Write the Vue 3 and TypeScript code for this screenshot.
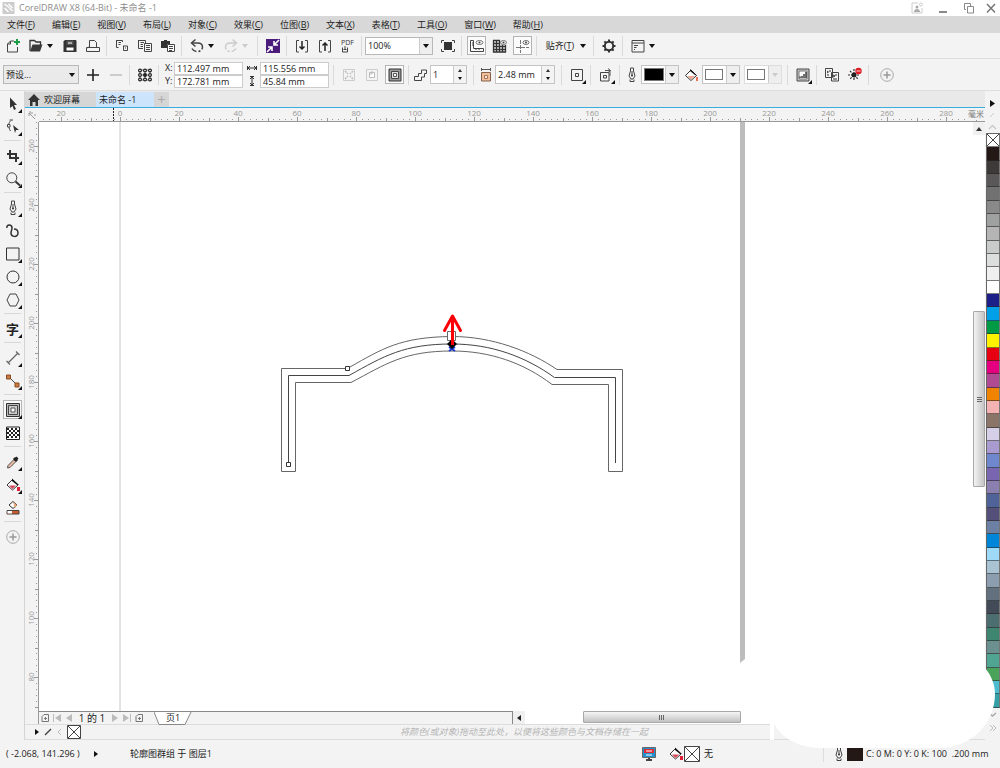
<script setup lang="ts">
import { ref } from 'vue'

interface Tool {
  kind: 'btn' | 'caret' | 'sep' | 'wide'
  icon?: string
  label?: string
  active?: boolean
  faint?: boolean
  flyout?: boolean
}

const G = '#444'
const icons: Record<string, string> = {
  new: `<path d="M9 3H5.500L2.500 6V14H12.500V9M5.500 3V6H2.500" fill="none" stroke="${G}"/><path d="M12 1V7M9 4H15" stroke="#1a9d45" stroke-width="2"/>`,
  open: `<path d="M2 13V2.500H6.500L8 4H12.500V7" fill="none" stroke="#333" stroke-width="1.300"/><path d="M4.500 6.500H14.500L12 13.500H2Z" fill="#3a3a3a"/>`,
  save: `<path d="M3 2H14L14.500 3V14H1.500V3.500Z" fill="#333"/><path d="M4.500 2.500H11.500V7H4.500Z" fill="#555"/><path d="M4.500 9.500H11.500V12.500H4.500Z" fill="#fff"/><path d="M6 5H10M6 11H7.500" stroke="#fff"/>`,
  print: `<path d="M4.500 9V2.500H9.500L11.500 4.500V9M1.500 9.500H14.500V13.500H1.500ZM3.500 9L2 10" fill="none" stroke="${G}"/><path d="M4 9.500H12" stroke="${G}"/>`,
  cut: `<path d="M2.500 2.500H8.500V4M2.500 2V9.500H4.500M4.500 4.500H7M4.500 6.500H6.500M9 8H13.500V12.500H9.500V8M11 10H12" fill="none" stroke="${G}"/>`,
  copy: `<path d="M1.500 2.500H8.500V5M1.500 2V10.500H6M3.500 4.500H7M3.500 6.500H6M3.500 8.500H6M7.500 5.500H14.500V13.500H7.500ZM9 7.500H13M9 9.500H13M9 11.500H13" fill="none" stroke="${G}"/>`,
  paste: `<path d="M1 3H4V2H7V3H10V6H7V10H1Z" fill="#333"/><path d="M7.500 6.500H14.500V13.500H7.500Z" fill="#fff" stroke="${G}"/><path d="M9 8.500H13M9 10.500H13M9 12.500H12" stroke="${G}"/>`,
  undo: `<path d="M3 5H8.500C12 5 13.500 7 13.500 9C13.500 12 11 13.500 8.500 13.500C6 13.500 4 12.500 3 10.500" fill="none" stroke="${G}" stroke-width="1.500" stroke-dasharray="15 2 2 2"/><path d="M6.500 1.500L2.500 5L6.500 8.500" fill="none" stroke="${G}" stroke-width="1.500"/>`,
  redo: `<path d="M13 5H7.500C4 5 2.500 7 2.500 9C2.500 12 5 13.500 7.500 13.500C10 13.500 12 12.500 13 10.500" fill="none" stroke="#ccc" stroke-width="1.500" stroke-dasharray="15 2 2 2"/><path d="M9.500 1.500L13.500 5L9.500 8.500" fill="none" stroke="#ccc" stroke-width="1.500"/>`,
  launch: `<path d="M1 1H15V15H1Z" fill="#4a1b7a"/><path d="M14 2L9 7M9 3V7H13M2 14L7 9M3 9H7V13" fill="none" stroke="#fff" stroke-width="1.600"/>`,
  import: `<path d="M5 2.500H2.500V14H5M11 2.500H13.500V14H11" fill="none" stroke="${G}"/><path d="M8 3V11M5.500 8.500L8 11L10.500 8.500" fill="none" stroke="#222" stroke-width="1.500"/>`,
  export: `<path d="M5 2.500H2.500V14H5M11 2.500H13.500V14H11" fill="none" stroke="${G}"/><path d="M8 13V5M5.500 7.500L8 5L10.500 7.500" fill="none" stroke="#222" stroke-width="1.500"/>`,
  pdf: `<text x="1" y="7" font-family="Open Sans, sans-serif" font-size="7" fill="#333">PDF</text><path d="M2.500 9.500V14H7.500V9.500M5 8V12M3.500 11.500H6.500" fill="none" stroke="${G}"/>`,
  full: `<path d="M4 4H12V12H4Z" fill="#333"/><path d="M1.500 5V2.500H4M12 2.500H14.500V5M14.500 11V13.500H12M4 13.500H1.500V11" fill="none" stroke="${G}"/>`,
  rulers: `<path d="M1.500 2.500H4.500V10.500H14.500V13.500H1.500ZM3 5H4M3 7H4M7 11V12M10 11V12" fill="none" stroke="${G}"/><ellipse cx="10.500" cy="4.500" rx="3.500" ry="2" fill="none" stroke="#777"/><circle cx="10.500" cy="4.500" r="1" fill="#444"/>`,
  grid: `<path d="M1.500 2V14.500M4.500 2V14.500M7.500 2V14.500M10.500 7V14.500M13.500 7V14.500M1 2.500H8M1 5.500H8M1 8.500H14M1 11.500H14M1 14H14" stroke="#333" stroke-width="1.300"/><ellipse cx="11.500" cy="4.500" rx="3" ry="2" fill="none" stroke="#777"/><circle cx="11.500" cy="4.500" r="1" fill="#444"/>`,
  guides: `<path d="M5.500 2V15" stroke="#777" stroke-dasharray="4 1"/><path d="M1 9.500H14" stroke="#777" stroke-dasharray="4 1"/><ellipse cx="11" cy="4.500" rx="3" ry="2" fill="none" stroke="#777"/><circle cx="11" cy="4.500" r="1" fill="#444"/>`,
  gear: `<circle cx="8" cy="8" r="4.200" fill="none" stroke="#333" stroke-width="2"/><path d="M8 1.500V4M8 12V14.500M1.500 8H4M12 8H14.500M3.400 3.400L5 5M11 11L12.600 12.600M12.600 3.400L11 5M5 11L3.400 12.600" stroke="#333" stroke-width="2"/>`,
  panel: `<path d="M2 2.500H14V14H2ZM2 5H14" fill="none" stroke="${G}"/><path d="M4 7.500H8M4 9.500H6.500M4 11.500H5" stroke="${G}"/>`,
  plus: `<path d="M8 2V14M2 8H14" stroke="#222" stroke-width="1.600"/>`,
  minus: `<path d="M2 8H14" stroke="#bbb" stroke-width="1.400"/>`,
  origin: `<path d="M2 3H14M2 8H14M2 13H14M3 3V13M8 3V13M13 3V13" stroke="#777"/><g fill="#fff" stroke="#222" stroke-width="1.200"><circle cx="3" cy="3.500" r="1.400"/><circle cx="8" cy="3.500" r="1.400"/><circle cx="13" cy="3.500" r="1.400"/><circle cx="3" cy="8" r="1.400"/><circle cx="13" cy="8" r="1.400"/><circle cx="3" cy="12.500" r="1.400"/><circle cx="8" cy="12.500" r="1.400"/><circle cx="13" cy="12.500" r="1.400"/></g><circle cx="8" cy="8" r="2" fill="#222"/>`,
  toCenter: `<path d="M2.500 2.500H13.500V13.500H2.500Z" fill="none" stroke="#ccc"/><path d="M4 4L7 7M12 4L9 7M4 12L7 9M12 12L9 9" stroke="#bbb" stroke-width="1.500" stroke-dasharray="2 1"/>`,
  inside: `<path d="M2.500 2.500H13.500V13.500H2.500Z" fill="none" stroke="#ccc"/><path d="M5.500 5.500H10.500V10.500H5.500Z" fill="#fff" stroke="#bbb"/><path d="M5 7H8V4" fill="none" stroke="#bbb"/>`,
  outside: `<path d="M2 2H14V14H2Z" fill="#999" stroke="#333"/><path d="M4.500 4.500H11.500V11.500H4.500Z" fill="#ddd" stroke="#444"/><path d="M6.500 6.500H9.500V9.500H6.500Z" fill="#fff" stroke="#555"/>`,
  steps: `<path d="M1.500 9.500H5.500V6.500H8.500V3H13.500V6.500H11.500V10H8.500V13.500H1.500Z" fill="none" stroke="${G}"/>`,
  offset: `<path d="M3.500 5.500H12.500V14H3.500Z" fill="#f0bd99" stroke="#85604a"/><path d="M3 2.500H13M3.500 1V4M12.500 1V4" stroke="#555"/><path d="M6.500 8.500H9.500V11.500H6.500Z" fill="#fbe4d3" stroke="#a5745a"/>`,
  corner: `<path d="M2.500 2.500H13.500V13.500H2.500ZM6.500 6.500H9.500V9.500H6.500Z" fill="none" stroke="${G}"/>`,
  colorstep: `<path d="M2.500 5.500H11V14H2.500ZM5.500 8.500H8.500V11H5.500Z" fill="none" stroke="${G}"/><path d="M7 3.500H12V9M10 1.500L12.500 3.500L10 5.500" fill="none" stroke="#555"/>`,
  pen: `<path d="M6.500 1H9.500V4L11 9L9 12H7L5 9L6.500 4ZM8 4V9M6 12.500V14.500H10V12.500" fill="none" stroke="${G}"/><circle cx="8" cy="8.500" r="1" fill="#333"/>`,
  bucket: `<path d="M8 3L13.500 8.500L8 13.500L2.500 8.500Z" fill="#fff" stroke="#333"/><path d="M7 2L14 8.500L12 8L7 4Z" fill="#111"/><path d="M4.500 9H11.500L8 12.500Z" fill="#eda58f"/><path d="M14 10V14" stroke="#e8745a" stroke-width="2"/>`,
  accel: `<path d="M2 2H14V14H2Z" fill="#ccc" stroke="#444"/><path d="M4 4H12V12H4Z" fill="#fff" stroke="#777"/><path d="M5 11V9.500M7 11V9M9 11V7M11 11V5" stroke="#333" stroke-width="1.400"/>`,
  copyprops: `<path d="M1.500 1.500H8.500V10.500H1.500ZM7.500 5.500H14.500V14H7.500Z" fill="#f5f5f5" stroke="${G}"/><path d="M3 4L4.500 5L3 6M5 4H7M3 8H5M9 8L11 9L9 10M11 8H13M9 12H13" fill="none" stroke="#333"/>`,
  clear: `<path d="M7 2V14M1 8H13M3 4L11 12M11 4L3 12" stroke="#333" stroke-dasharray="2 1" stroke-width="1.200"/><circle cx="7" cy="8" r="2.500" fill="#222"/><circle cx="11.500" cy="4" r="3.200" fill="#e01b24"/><path d="M9.500 4H13.500" stroke="#ffd5d5"/>`,
  add: `<circle cx="8" cy="8" r="6.300" fill="none" stroke="#aaa"/><path d="M8 4.500V11.500M4.500 8H11.500" stroke="#999" stroke-width="1.500"/>`,
  pick: `<path d="M5 1.500L12 9H9L11 13L9 14L7.500 10L5 12Z" fill="#333"/>`,
  shape: `<path d="M6 1.500C3 4 3 8 5.500 12" fill="none" stroke="#444"/><path d="M4.500 1H8M2.500 5.500H5V8H2.500Z" fill="#fff" stroke="#444"/><path d="M8 6L14 11L11 11L10 14Z" fill="#333"/>`,
  crop: `<path d="M5 2V10H14M2 6H11V14" fill="none" stroke="#333" stroke-width="2"/>`,
  zoom: `<circle cx="6.800" cy="6.800" r="5" fill="none" stroke="#444"/><path d="M10.500 10.500L15 14.500" stroke="#333" stroke-width="2"/>`,
  curve: `<path d="M2 5C1 1 7 1 7 5C7 7 6 8 6 10C6 14 13 15 13 10C13 7 11 6 9 6" fill="none" stroke="#333" stroke-width="1.500"/>`,
  rect: `<path d="M1.500 2H14V14H1.500Z" fill="none" stroke="#333"/>`,
  ellipse: `<circle cx="8" cy="8" r="6" fill="none" stroke="#333"/>`,
  poly: `<path d="M5 2H11L14 8L11 14H5L2 8Z" fill="none" stroke="#444"/>`,
  dimension: `<path d="M3 13L13 3M1.500 11L5 14.500M11 1.500L14.500 5" fill="none" stroke="#666" stroke-width="1.300"/>`,
  connect: `<path d="M4 4L12 12" stroke="#444"/><path d="M1.500 2H5.500V6H1.500ZM10 10H14V14H10Z" fill="#c77c45" stroke="#8b4a20"/>`,
  contour: `<path d="M1.500 1.500H14.500V14.500H1.500Z" fill="#bbb" stroke="#333"/><path d="M3.500 3.500H12.500V12.500H3.500Z" fill="#ccc" stroke="#444"/><path d="M6 6H10V10H6Z" fill="#fff" stroke="#555"/>`,
  checker: `<path d="M1.500 2H14.500V14.500H1.500Z" fill="#fff" stroke="#222"/><path d="M2 4H14M2 8H14M2 12H14" stroke="#222" stroke-width="2" stroke-dasharray="2 2"/><path d="M4 6H14M4 10H14" stroke="#222" stroke-width="2" stroke-dasharray="2 2"/>`,
  dropper: `<path d="M2.500 14L3 11.500L9 5.500L11 7.500L5 13.500Z" fill="#e8b9a2" stroke="#555"/><path d="M9 4L12 7M10.500 5.500L12.500 3.500" stroke="#222" stroke-width="3"/>`,
  fill: `<path d="M7.500 2.500L13 8L7.500 13L2 8Z" fill="#fff" stroke="#333"/><path d="M7 1.500L14 8L12 8L7 4Z" fill="#111"/><path d="M4 8.500H11L7.500 12Z" fill="#d9465a"/><path d="M13.500 10V14" stroke="#df1f35" stroke-width="3"/>`,
  smartfill: `<path d="M8 1.500L12 5L8 8.500L4 5Z" fill="#fff" stroke="#333"/><path d="M8 2L12 5L10 8Z" fill="#e8a273"/><path d="M2 10.500H14V14H2Z" fill="#cb5a30" stroke="#444"/><path d="M2.500 11H7V13.500H2.500Z" fill="#fff"/>`,
  monitor: `<path d="M1.500 1.500H14.500V11.500H1.500Z" fill="#2491cf" stroke="#666"/><path d="M3 3H13V7H3Z" fill="#e02b35"/><path d="M5 5H11M5 9H11" stroke="#fff"/><path d="M5 14H11M8 12V14" stroke="#444" stroke-width="2"/>`,
}

const b = (icon: string, label: string, extra: Partial<Tool> = {}): Tool => ({ kind: 'btn', icon, label, ...extra })
const sep: Tool = { kind: 'sep' }
const wide: Tool = { kind: 'wide' }
const caret = (label: string, faint = false): Tool => ({ kind: 'caret', label, faint })

const standardLeft: Tool[] = [
  b('new', '新建'), b('open', '打开'), caret('最近文件'), b('save', '保存'), b('print', '打印'), sep,
  b('cut', '剪切'), b('copy', '复制'), b('paste', '粘贴'), sep,
  b('undo', '撤消'), caret('撤消列表'), b('redo', '重做'), caret('重做列表', true), wide,
  b('launch', '启动'), sep, b('import', '导入'), b('export', '导出'), b('pdf', '发布为 PDF'), sep,
]
const standardMid: Tool[] = [
  b('full', '全屏预览'), sep, b('rulers', '显示标尺', { active: true }), b('grid', '显示网格'),
  b('guides', '显示辅助线', { active: true }), sep,
]
const standardRight: Tool[] = [caret('贴齐选项'), sep, b('gear', '选项'), sep, b('panel', '应用程序启动器'), caret('启动器列表')]

const toolbox: Tool[] = [
  b('pick', '选择', { flyout: true }), b('shape', '形状', { flyout: true }), sep,
  b('crop', '裁剪', { flyout: true }), b('zoom', '缩放', { flyout: true }), sep,
  b('pen', '钢笔', { flyout: true }), b('curve', '艺术笔'), b('rect', '矩形', { flyout: true }),
  b('ellipse', '椭圆形', { flyout: true }), b('poly', '多边形', { flyout: true }), sep,
  b('text', '文本', { flyout: true }), sep,
  b('dimension', '度量', { flyout: true }), b('connect', '连接器', { flyout: true }), sep,
  b('contour', '轮廓图', { flyout: true, active: true }), b('checker', '透明度'), sep,
  b('dropper', '滴管', { flyout: true }), b('fill', '交互式填充', { flyout: true }), b('smartfill', '智能填充'), sep,
  b('add', '添加工具'),
]

const menus: [string, string][] = [
  ['文件', 'F'], ['编辑', 'E'], ['视图', 'V'], ['布局', 'L'], ['对象', 'C'], ['效果', 'C'],
  ['位图', 'B'], ['文本', 'X'], ['表格', 'T'], ['工具', 'O'], ['窗口', 'W'], ['帮助', 'H'],
]

const palette = [
  '#231815', '#3e3a39', '#595757', '#727171', '#898989', '#9fa0a0', '#b5b5b6', '#c9caca', '#dcdddd', '#efefef',
  '#ffffff', '#1d2088', '#00a0e9', '#009944', '#fff100', '#e60012', '#e4007f', '#b04a93', '#f08300', '#f4b3b3',
  '#8b7568', '#d5d0e8', '#a99ad0', '#6f87cc', '#7866b0', '#8a7fae', '#4f6399', '#55507a', '#6c80a4', '#0086d8',
  '#9fd9f8', '#a9c3d3', '#8b9dae', '#63717f', '#434b58', '#4d6e70', '#3e8670', '#6b908f', '#4fa592', '#4aa35a',
  '#4cbdd0', '#32a0a5',
]

const posX = ref('112.497 mm')
const posY = ref('172.781 mm')
const sizeW = ref('115.556 mm')
const sizeH = ref('45.84 mm')
const stepCount = ref('1')
const offset = ref('2.48 mm')

const UNIT = 59
const hLabels = Array.from({ length: 16 }, (_, i) => ({ at: 22 + i * UNIT, text: String(Math.abs((i - 1) * 20)) }))
const vLabels = Array.from({ length: 10 }, (_, i) => ({ at: 24 + i * UNIT, text: String(260 - i * 20) }))
const ticks = (start: number, count: number) => {
  let fine = ''
  let half = ''
  for (let i = 0; i < count; i++) {
    const p = start + Math.round((i * UNIT) / 10)
    if (i % 10 === 5) half += `${p} `
    else fine += `${p} `
  }
  return { fine: fine.trim().split(' '), half: half.trim().split(' ') }
}
const hTicks = ticks(-37, 180)
const vTicks = ticks(-35, 112)
</script>

<template>
  <div class="app">
    <header class="title">
      <svg class="logo" viewBox="0 0 12 12"><path d="M0 0H12V12H0Z" fill="#ccc" /><path d="M2 2L6 5L10 9M6 2L10 6M2 6L6 10" stroke="#fff" stroke-width="1.500" /></svg>
      <span class="caption">CorelDRAW X8 (64-Bit) - 未命名 -1</span>
      <button class="win" aria-label="登录"><svg viewBox="0 0 12 12"><path d="M1 1H7M1 1V11H11V6" fill="none" stroke="#ccc" /><circle cx="6" cy="5" r="1.500" fill="#aaa" /><path d="M3 10C3 6 9 6 9 10Z" fill="#aaa" /><circle cx="10" cy="2.500" r="1.500" fill="none" stroke="#ccc" /></svg></button>
      <button class="win" aria-label="最小化"><svg viewBox="0 0 12 12"><path d="M2 10H10" stroke="#888" stroke-width="2" /></svg></button>
      <button class="win" aria-label="还原"><svg viewBox="0 0 12 12"><path d="M3 7.500H1.500V1.500H7.500V4M4.500 4.500H10.500V11H4.500Z" fill="none" stroke="#888" /></svg></button>
      <button class="win close" aria-label="关闭"><svg viewBox="0 0 12 12"><path d="M2 2L10 10.500M10 2L2 10.500" stroke="#777" stroke-width="1.500" /></svg></button>
    </header>

    <nav class="menubar">
      <button v-for="m in menus" :key="m[0]">{{ m[0] }}(<u>{{ m[1] }}</u>)</button>
    </nav>

    <div class="bar standard">
      <template v-for="(t, i) in standardLeft" :key="'l' + i">
        <button v-if="t.kind === 'btn'" class="ib" :aria-label="t.label"><svg viewBox="0 0 16 16" v-html="icons[t.icon!]" /></button>
        <button v-else-if="t.kind === 'caret'" class="caret" :class="{ faint: t.faint }" :aria-label="t.label"><i /></button>
        <span v-else class="sep" :class="{ wide: t.kind === 'wide' }" />
      </template>
      <div class="combo zoomlevel"><select aria-label="缩放级别"><option>100%</option></select><span class="drop"><i /></span></div>
      <template v-for="(t, i) in standardMid" :key="'m' + i">
        <button v-if="t.kind === 'btn'" class="ib" :class="{ active: t.active }" :aria-label="t.label"><svg viewBox="0 0 16 16" v-html="icons[t.icon!]" /></button>
        <span v-else class="sep" />
      </template>
      <button class="snap">贴齐(<u>T</u>)</button>
      <template v-for="(t, i) in standardRight" :key="'r' + i">
        <button v-if="t.kind === 'btn'" class="ib" :aria-label="t.label"><svg viewBox="0 0 16 16" v-html="icons[t.icon!]" /></button>
        <button v-else-if="t.kind === 'caret'" class="caret" :aria-label="t.label"><i /></button>
        <span v-else class="sep" />
      </template>
    </div>

    <div class="bar props">
      <div class="combo preset"><select aria-label="预设"><option>预设...</option></select><span class="drop"><i /></span></div>
      <button class="ib" aria-label="添加预设"><svg viewBox="0 0 16 16" v-html="icons.plus" /></button>
      <button class="ib" aria-label="删除预设"><svg viewBox="0 0 16 16" v-html="icons.minus" /></button>
      <span class="sep" />
      <button class="ib" aria-label="对象原点"><svg viewBox="0 0 16 16" v-html="icons.origin" /></button>
      <span class="sep" />
      <div class="pair">
        <label for="px">X:</label><input id="px" v-model="posX" />
        <label for="py">Y:</label><input id="py" v-model="posY" />
      </div>
      <div class="pair size">
        <label for="sw" aria-label="宽度"><svg viewBox="0 0 12 12"><path d="M1 6H11M1.500 4V8M10.500 4V8M4 4L2 6L4 8M8 4L10 6L8 8" fill="none" stroke="#333" /></svg></label><input id="sw" v-model="sizeW" />
        <label for="sh" aria-label="高度"><svg viewBox="0 0 12 12"><path d="M6 1V11M4 1.500H8M4 10.500H8M4 4L6 2L8 4M4 8L6 10L8 8" fill="none" stroke="#333" /></svg></label><input id="sh" v-model="sizeH" />
      </div>
      <span class="sep" />
      <button class="ib" aria-label="到中心"><svg viewBox="0 0 16 16" v-html="icons.toCenter" /></button>
      <button class="ib" aria-label="内部轮廓"><svg viewBox="0 0 16 16" v-html="icons.inside" /></button>
      <button class="ib active" aria-label="外部轮廓"><svg viewBox="0 0 16 16" v-html="icons.outside" /></button>
      <span class="sep" />
      <label class="ib slim" for="steps" aria-label="轮廓图步长"><svg viewBox="0 0 16 16" v-html="icons.steps" /></label>
      <div class="spin steps"><input id="steps" v-model="stepCount" /><span class="ud"><button aria-label="增加步长"><i class="up" /></button><button aria-label="减少步长"><i /></button></span></div>
      <span class="sep" />
      <label class="ib slim" for="offset" aria-label="轮廓图偏移"><svg viewBox="0 0 16 16" v-html="icons.offset" /></label>
      <div class="spin offset"><input id="offset" v-model="offset" /><span class="ud"><button aria-label="增加偏移"><i class="up" /></button><button aria-label="减少偏移"><i /></button></span></div>
      <span class="sep" />
      <button class="ib flyout" aria-label="轮廓图角"><svg viewBox="0 0 16 16" v-html="icons.corner" /></button>
      <span class="sep" />
      <button class="ib flyout" aria-label="轮廓色"><svg viewBox="0 0 16 16" v-html="icons.colorstep" /></button>
      <span class="sep" />
      <span class="ib slim"><svg viewBox="0 0 16 16" v-html="icons.pen" /></span>
      <button class="swatch" aria-label="轮廓颜色"><span class="chip black" /><span class="drop"><i /></span></button>
      <span class="ib"><svg viewBox="0 0 16 16" v-html="icons.bucket" /></span>
      <button class="swatch" aria-label="填充色"><span class="chip" /><span class="drop"><i /></span></button>
      <button class="swatch last" aria-label="最后一个填充挑选器" disabled><span class="chip" /><span class="drop"><i /></span></button>
      <span class="sep" />
      <button class="ib flyout" aria-label="对象和颜色加速"><svg viewBox="0 0 16 16" v-html="icons.accel" /></button>
      <span class="sep" />
      <button class="ib" aria-label="复制轮廓图属性"><svg viewBox="0 0 16 16" v-html="icons.copyprops" /></button>
      <button class="ib" aria-label="清除轮廓"><svg viewBox="0 0 16 16" v-html="icons.clear" /></button>
      <span class="sep" />
      <button class="ib custom" aria-label="快速自定义"><svg viewBox="0 0 16 16" v-html="icons.add" /></button>
    </div>

    <div class="work">
      <aside class="toolbox">
        <template v-for="(t, i) in toolbox" :key="i">
          <span v-if="t.kind === 'sep'" class="hsep" />
          <button v-else class="ib" :class="{ active: t.active, flyout: t.flyout }" :aria-label="t.label">
            <b v-if="t.icon === 'text'">字</b>
            <svg v-else viewBox="0 0 16 16" v-html="icons[t.icon!]" />
          </button>
        </template>
      </aside>

      <main class="doc">
        <div class="tabs">
          <button class="tab home"><svg viewBox="0 0 12 12"><path d="M6 0L12 6H10V12H7.500V8H4.500V12H2V6H0Z" fill="#333" /></svg>欢迎屏幕</button>
          <button class="tab current">未命名 -1</button>
          <button class="tab more" aria-label="新建文档">+</button>
        </div>
        <div class="sheet">
          <div class="corner"><svg viewBox="0 0 14 14"><path d="M4 5L10 11M4 5V8M4 5H8M5 3V4M9 7H11" fill="none" stroke="#999" /></svg></div>
          <div class="hruler">
            <svg width="100%" height="14">
              <g fill="#999">
                <rect v-for="x in hTicks.fine" :key="'f' + x" :x="x" y="11" width="1" height="1" />
                <rect v-for="x in hTicks.half" :key="'h' + x" :x="x" y="10" width="1" height="3" />
                <rect v-for="l in hLabels" :key="'t' + l.at" :x="l.at" y="9" width="1" height="4" />
              </g>
              <text v-for="l in hLabels" :key="l.at" :x="l.at" y="8" text-anchor="middle">{{ l.text }}</text>
              <path d="M74.500 0V13" stroke="#222" stroke-dasharray="2 1" />
            </svg>
            <span class="unit">毫米</span>
          </div>
          <div class="vruler">
            <svg width="14" height="100%">
              <g fill="#999">
                <rect v-for="y in vTicks.fine" :key="'f' + y" x="11" :y="y" width="1" height="1" />
                <rect v-for="y in vTicks.half" :key="'h' + y" x="10" :y="y" width="3" height="1" />
                <rect v-for="l in vLabels" :key="'t' + l.at" x="9" :y="l.at" width="4" height="1" />
              </g>
              <text v-for="l in vLabels" :key="l.at" :transform="`translate(9 ${l.at}) rotate(-90)`" text-anchor="middle">{{ l.text }}</text>
            </svg>
          </div>
          <div class="canvas">
            <svg class="art" width="100%" height="100%">
              <path d="M81 0V600" stroke="#c8c8c8" />
              <path d="M701 0H706V537L701 541Z" fill="#bdbdbd" />
              <g transform="translate(-39 -122)" fill="none" stroke="#666">
                <path d="M281.500 471.500V368.500H347L350 367C382 349 400 337 452 336.500C492 336.500 530 351 557 369.500H622.500V471.500H608.500V384.500H552C524 363 490 351 452 351C404 351 386 364 351 382.500H295.500V471.500Z" />
                <path d="M288.500 463V375.500H349C384 356 404 344 452 344C492 344 526 357 554.500 377.500H615.500V463" stroke="#444" />
                <path d="M345.500 366.500H349.500V370.500H345.500ZM286.500 462.500H290.500V466.500H286.500Z" fill="#fff" stroke="#333" />
                <path d="M447.500 331.500H455.500V340.500H447.500Z" fill="#fff" />
                <path d="M449 347L455 351M455 347L449 351" stroke="#1534c9" stroke-width="2" />
                <path d="M452 339L457 344L452 349L447 344Z" fill="#000" stroke="none" />
                <path d="M452.500 345V317" stroke="#fb0007" stroke-width="3" />
                <path d="M444.500 330.500L452.500 316L460.500 330.500" stroke="#fb0007" stroke-width="3" stroke-linecap="round" stroke-linejoin="round" />
              </g>
            </svg>
            <div class="vscroll">
              <button aria-label="向上滚动"><i class="up" /></button>
              <span class="thumb"><em /><em /><em /></span>
            </div>
          </div>
          <div class="foot-ruler" />
          <div class="pagebar">
            <div class="pages">
              <button aria-label="在前面添加页"><svg viewBox="0 0 10 10"><path d="M2 3.500L4 1.500H8.500V8.500H2ZM4 5.500H7M5.500 4V7" fill="none" stroke="#777" /></svg></button>
              <button aria-label="第一页"><svg viewBox="0 0 10 10"><path d="M1.500 1V9" stroke="#bbb" /><path d="M9 1V9L3 5Z" fill="#bbb" /></svg></button>
              <button aria-label="上一页"><svg viewBox="0 0 10 10"><path d="M8 1V9L2 5Z" fill="#bbb" /></svg></button>
              <span class="count">1 的 1</span>
              <button aria-label="下一页"><svg viewBox="0 0 10 10"><path d="M2 1V9L8 5Z" fill="#bbb" /></svg></button>
              <button aria-label="最后一页"><svg viewBox="0 0 10 10"><path d="M8.500 1V9" stroke="#bbb" /><path d="M1 1V9L7 5Z" fill="#bbb" /></svg></button>
              <button aria-label="在后面添加页"><svg viewBox="0 0 10 10"><path d="M2 3.500L4 1.500H8.500V8.500H2ZM4 5.500H7M5.500 4V7" fill="none" stroke="#777" /></svg></button>
              <button class="pagetab"><svg viewBox="0 0 38 13"><path d="M0 0L5 12.500H31L37 0Z" fill="#fff" /><path d="M0 0L5 12.500H31L37 0" fill="none" stroke="#888" /></svg><span>页1</span></button>
            </div>
            <div class="hscroll">
              <button aria-label="向左滚动"><i class="left" /></button>
              <span class="thumb"><em /><em /><em /></span>
            </div>
          </div>
        </div>
        <div class="docpalette">
          <svg viewBox="0 0 60 16"><path d="M10 5V11L14 8Z" fill="#111" /><path d="M20 11L26 5" stroke="#444" stroke-width="1.500" /><path d="M36 5L33 8L36 11" fill="none" stroke="#bbb" /><path d="M42.500 1.500H55.500V14.500H42.500ZM43 2L55 14M55 2L43 14" fill="#fff" stroke="#444" /></svg>
          <p>将颜色(或对象)拖动至此处，以便将这些颜色与文档存储在一起</p>
        </div>
      </main>

      <aside class="palette">
        <div class="phead"><svg viewBox="0 0 14 42"><path d="M4 9V16L9 12.500Z" fill="#111" /><path d="M4 26L8 22" stroke="#ccc" /><path d="M3 38L6.500 34.500L10 38" fill="none" stroke="#ccc" stroke-width="1.500" /></svg></div>
        <div class="colors">
          <button class="none" aria-label="无填充"><svg viewBox="0 0 12 12" preserveAspectRatio="none"><path d="M0 0L12 12M12 0L0 12" stroke="#444" /></svg></button>
          <button v-for="(c, i) in palette" :key="i" :style="{ background: c }" :aria-label="c" />
        </div>
        <div class="ptail"><svg viewBox="0 0 14 32"><path d="M3 5L6.500 8L10 5" fill="none" stroke="#aaa" stroke-width="1.500" /><path d="M4 17L7 20L4 23M7 17L10 20L7 23" fill="none" stroke="#bbb" /></svg></div>
      </aside>

      <svg class="patch" viewBox="0 0 232 84"><path d="M0 0H220C226 7 230 16 230 26C230 54 208 80 174 80H58C30 80 15 67 9 56V72H5V55H0Z" fill="#fff" /></svg>
    </div>

    <footer class="status">
      <span class="coords">( -2.068, 141.296 )</span>
      <button class="go" aria-label="更多信息"><i class="right" /></button>
      <span class="object">轮廓图群组 于 图层1</span>
      <span class="fillinfo">
        <svg class="i16" viewBox="0 0 16 16" v-html="icons.monitor" />
        <svg class="i16 paint" viewBox="0 0 16 16" v-html="icons.fill" />
        <svg class="i16" viewBox="0 0 16 16"><path d="M.5.5H15.500V15.500H.5ZM1 1L15 15M15 1L1 15" fill="#fff" stroke="#444" /></svg>
        <span>无</span>
      </span>
      <span class="lineinfo">
        <svg class="i16" viewBox="0 0 16 16" v-html="icons.pen" />
        <span class="ink" />
        <span>C: 0 M: 0 Y: 0 K: 100 &nbsp;.200 mm</span>
      </span>
    </footer>
  </div>
</template>

<style>
body { margin: 0; }
</style>

<style scoped>
.app {
  display: flex;
  flex-direction: column;
  min-height: 100vh;
  background: #f3f3f3;
  color: #222;
  font: 9px/12px "Open Sans", "Noto Sans CJK SC", sans-serif;
}
.app * { box-sizing: border-box; }
button, input, select { font: inherit; color: inherit; padding: 0; margin: 0; border: 0; background: none; border-radius: 0; }
button { display: flex; align-items: center; justify-content: center; flex: none; white-space: nowrap; }
svg { display: block; flex: none; }
i { display: block; width: 0; height: 0; border: 3px solid transparent; border-top: 4px solid #111; border-bottom: 0; }
i.up { border-top: 0; border-bottom: 4px solid #333; }
i.left { border: 3px solid transparent; border-right: 4px solid #222; border-left: 0; }
i.right { border: 3px solid transparent; border-left: 4px solid #111; border-right: 0; }

.title { display: flex; align-items: center; height: 16px; background: #fff; padding-left: 2px; }
.logo { width: 13px; height: 12px; }
.caption { flex: 1; padding-left: 4px; color: #8c8c8c; }
.win { width: 26px; height: 16px; }
.win.close { width: 18px; }
.win svg { width: 12px; height: 12px; }

.menubar { display: flex; gap: 17px; height: 17px; padding: 0 7px; background: #d8d8d8; }
.menubar u, .snap u { text-underline-offset: 1px; }

.bar { display: flex; align-items: center; border-bottom: 1px solid #dedede; }
.standard { height: 26px; padding-left: 1px; }
.props { height: 32px; padding-left: 3px; }
.ib { position: relative; display: flex; align-items: center; justify-content: center; flex: none; width: 23px; height: 23px; }
.ib svg { width: 16px; height: 16px; }
.ib.slim { width: 18px; }
.ib.active::before { content: ""; position: absolute; inset: 2px; border: 1px solid #b4b4b4; background: #fbfbfb; }
.ib.active svg { position: relative; }
.ib.flyout::after { content: ""; position: absolute; right: 2px; bottom: 2px; border: 2px solid #111; border-top-color: transparent; border-left-color: transparent; }
.ib.custom { margin-left: 3px; }
.sep { flex: none; width: 1px; height: 20px; margin: 0 3px 0 2px; background: #dadada; }
.sep.wide { margin: 0 3px 0 4px; }
.caret { width: 11px; height: 20px; justify-content: flex-start; }
.faint i, .swatch:disabled i { border-top-color: #ccc; }
.combo { display: flex; flex: none; border: 1px solid #b8b8b8; }
.combo select { flex: 1; min-width: 0; appearance: none; padding-left: 2px; }
.drop { display: flex; align-items: center; justify-content: center; width: 13px; }
.zoomlevel { width: 68px; height: 18px; margin-right: 3px; background: #fff; }
.zoomlevel .drop { background: #eee; border-left: 1px solid #ccc; }
.preset { width: 76px; height: 19px; margin-right: 2px; background: #eaeaea; }
.snap { width: 40px; }

.pair { display: grid; grid-template-columns: 12px 69px; grid-auto-rows: 13px; align-items: center; }
.pair label { padding-left: 3px; }
.pair input { width: 69px; height: 13px; border: 1px solid #ccc; background: #fff; padding-left: 2px; }
.pair.size { grid-template-columns: 17px 69px; margin-right: 2px; }
.pair.size svg { width: 12px; height: 12px; }
.spin { display: flex; flex: none; height: 19px; margin-right: 4px; border: 1px solid #c4c4c4; background: #fff; }
.spin input { flex: 1; min-width: 0; padding-left: 2px; }
.steps { width: 37px; }
.offset { width: 60px; }
.ud { display: flex; flex-direction: column; justify-content: space-around; width: 13px; background: #f3f3f3; border-left: 1px solid #ccc; }
.ud i { border-width: 2px; border-top-width: 3px; border-bottom-width: 0; }
.ud i.up { border-top-width: 0; border-bottom-width: 3px; }
.swatch { width: 38px; height: 19px; border: 1px solid #c4c4c4; background: #fff; justify-content: space-between; padding-left: 2px; }
.swatch.last { margin: 0 3px 0 4px; border-color: #ddd; }
.swatch .drop { height: 17px; background: #eee; border-left: 1px solid #ccc; }
.chip { width: 18px; height: 11px; border: 1px solid #777; background: #fff; }
.chip.black { width: 20px; height: 13px; background: #000; }

.work { position: relative; flex: 1; display: flex; min-height: 0; }
.toolbox { width: 25px; padding: 1px 0 0 1px; border-right: 1px solid #d4d4d4; }
.hsep { display: block; height: 1px; margin: 2px 3px 3px; background: #d8d8d8; }
.toolbox b { font: 700 13px/16px "Noto Sans CJK SC", sans-serif; position: relative; }

.doc { flex: 1; min-width: 0; display: flex; flex-direction: column; }
.tabs { display: flex; height: 17px; padding-top: 1px; background: #e9e9e9; border-bottom: 1px solid #38aee0; }
.tab { background: #d6d6d6; padding: 0 3px; }
.home { width: 71px; justify-content: flex-start; gap: 4px; }
.home svg { width: 12px; height: 12px; }
.current { width: 58px; background: #cde4fd; justify-content: flex-start; }
.more { width: 15px; color: #aaa; font-size: 14px; }
.sheet { flex: 1; min-height: 0; display: grid; grid-template-columns: 14px minmax(0, 1fr); grid-template-rows: 14px minmax(0, 1fr) 13px; }
.corner svg { width: 14px; height: 14px; }
.hruler { position: relative; overflow: hidden; border-bottom: 1px solid #999; }
.hruler text, .vruler text { font-size: 8px; fill: #999; }
.unit { position: absolute; right: 0; top: 0; padding: 0 1px; background: #f3f3f3; color: #777; font-size: 8px; }
.vruler { overflow: hidden; border-right: 1px solid #999; }
.foot-ruler { border-right: 1px solid #999; }
.canvas { position: relative; display: flex; background: #fff; overflow: hidden; }
.art { position: absolute; inset: 0; }
.vscroll { position: relative; width: 12px; margin-left: auto; }
.vscroll button, .hscroll button { width: 12px; height: 13px; background: #f0f0f0; }
.thumb { display: flex; align-items: center; justify-content: center; gap: 1px; border: 1px solid #a8a8a8; border-radius: 1px; background: linear-gradient(90deg, #f3f3f3, #c4c4c4); }
.vscroll .thumb { flex-direction: column; height: 176px; margin-top: 176px; }
.vscroll em { width: 5px; height: 1px; background: #666; }
.pagebar { display: flex; }
.pages { flex: 1; display: flex; align-items: center; border-top: 1px solid #888; border-right: 1px solid #888; }
.pages > button { width: 12px; }
.pages svg { width: 10px; height: 10px; }
.count { width: 34px; text-align: center; font-size: 10px; }
.pages > .pagetab { position: relative; width: 38px; height: 13px; margin-left: 9px; }
.pages > .pagetab svg { position: absolute; left: 0; top: 0; width: 38px; height: 13px; }
.pagetab span { position: relative; }
.hscroll { flex: 1; display: flex; background: #fff; }
.hscroll .thumb { width: 158px; height: 12px; margin-left: 58px; background: linear-gradient(#f5f5f5, #c2c2c2); }
.hscroll em { width: 1px; height: 5px; background: #666; }
.docpalette { display: flex; align-items: center; height: 16px; border-top: 1px solid #dcdcdc; border-bottom: 1px solid #dcdcdc; }
.docpalette svg { width: 60px; height: 16px; }
.docpalette p { flex: 1; margin: 0 22px 0 0; text-align: center; font-style: italic; color: #b4b4b4; }

.palette { width: 15px; padding-left: 1px; display: flex; flex-direction: column; }
.phead svg { width: 14px; height: 42px; }
.ptail svg { width: 14px; height: 32px; }
.colors { flex: 1; display: flex; flex-direction: column; border-left: 1px solid #666; border-top: 1px solid #666; }
.colors button { flex: 1 1 0; min-height: 0; border-bottom: 1px solid rgba(40, 40, 40, .6); border-right: 1px solid #777; }
.colors .none { background: #fff; }
.none svg { width: 100%; height: 12px; }
.patch { position: absolute; right: 3px; bottom: -12px; width: 232px; height: 84px; }

.status { display: flex; align-items: center; height: 28px; }
.coords { width: 94px; padding-left: 6px; }
.go { width: 8px; margin-right: 28px; justify-content: flex-start; }
.object { flex: 1; }
.fillinfo { display: flex; align-items: center; width: 182px; }
.i16 { width: 16px; height: 16px; }
.paint { margin-left: 11px; }
.fillinfo span { padding-left: 4px; }
.lineinfo { display: flex; align-items: center; width: 177px; padding-left: 7px; border-left: 1px solid #ddd; }
.ink { width: 16px; height: 14px; margin-right: 3px; background: #231815; }
</style>
